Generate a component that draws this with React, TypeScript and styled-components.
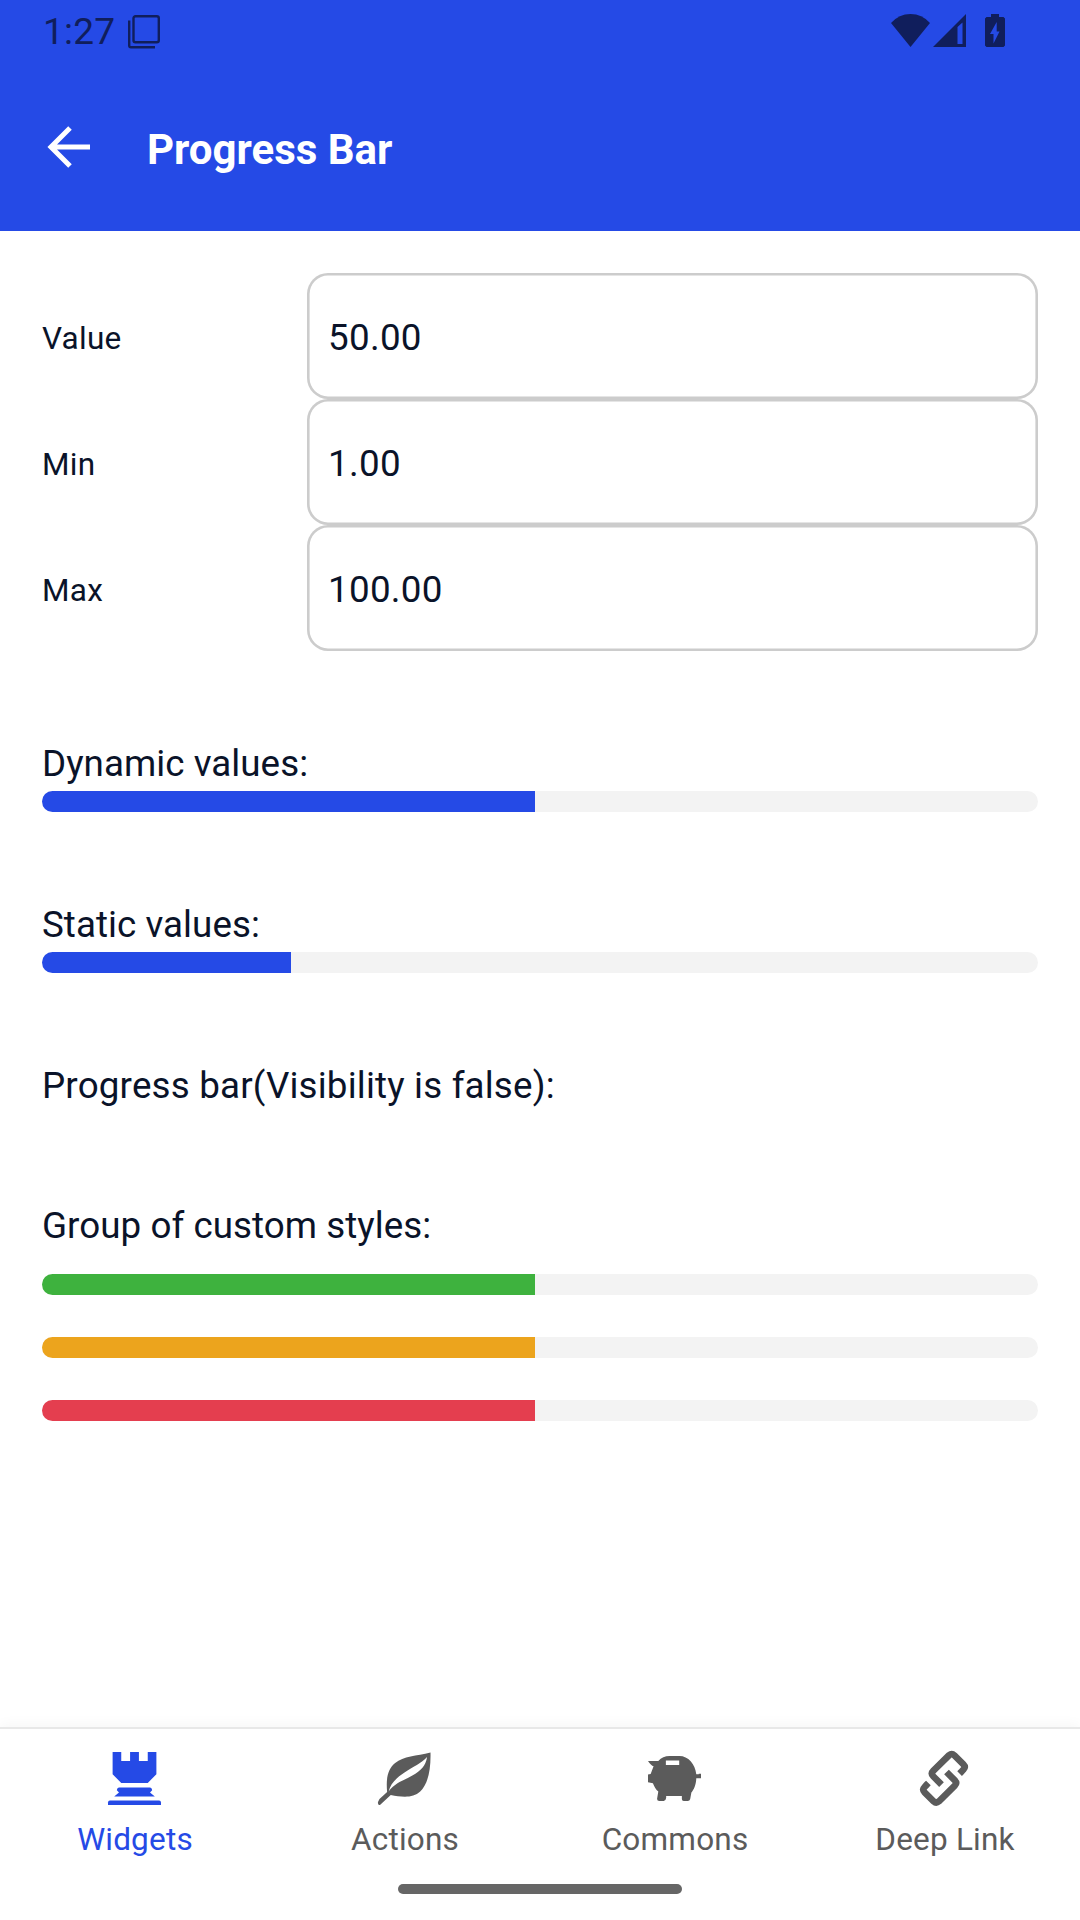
import React from "react";
import styled, { createGlobalStyle } from "styled-components";

const GlobalStyle = createGlobalStyle`
  * { box-sizing: border-box; }
  html, body { margin: 0; padding: 0; background: #fff; }
  body { font-family: Roboto, "Liberation Sans", sans-serif; color: #0a1329; overflow: hidden; }
`;

const Screen = styled.div`
  width: 1080px;
  height: 1920px;
  display: flex;
  flex-direction: column;
  background: #fff;
`;

const Header = styled.header`
  height: 231px;
  flex: none;
  display: flex;
  flex-direction: column;
  background: #254ae6;
`;

const StatusBar = styled.div`
  height: 63px;
  padding: 0 75px 2px 43px;
  display: flex;
  justify-content: space-between;
  color: #101e5c;
`;

const StatusGroup = styled.div<{ $drop?: number }>`
  display: flex;
  align-items: center;
  padding-top: ${(p) => p.$drop ?? 0}px;
`;

const Clock = styled.span`
  font-size: 37px;
  line-height: 59px;
  letter-spacing: 0.2px;
  width: 84px;
  white-space: nowrap;
`;

const AppBar = styled.div`
  flex: 1;
  padding: 0 47px;
  display: flex;
  align-items: center;
  gap: 56px;
`;

const Title = styled.h1`
  margin: 6px 0 0;
  font-size: 42px;
  line-height: 50px;
  font-weight: 700;
  color: #fff;
`;

const Content = styled.main`
  flex: 1;
  padding: 42px 42px 0;
  display: flex;
  flex-direction: column;
`;

const FieldRow = styled.div`
  display: flex;
  align-items: center;
  height: 126px;
`;

const FieldLabel = styled.span`
  width: 265px;
  font-size: 31.5px;
  line-height: 38px;
  letter-spacing: 0.25px;
  padding-top: 5px;
`;

const Field = styled.div`
  flex: 1;
  height: 126px;
  padding: 2px 21px 0;
  display: flex;
  align-items: center;
  border-radius: 21px;
  box-shadow: inset 0 0 0 2.6px #ccc;
  font-size: 36.75px;
  letter-spacing: 0.3px;
`;

const Section = styled.section<{ $top: number; $gap?: number }>`
  margin-top: ${(p) => p.$top}px;
  display: flex;
  flex-direction: column;
  gap: ${(p) => p.$gap ?? 0}px;
`;

const SectionTitle = styled.h2<{ $tracking?: number }>`
  margin: 0;
  font-size: 36.75px;
  line-height: 58px;
  height: 56px;
  font-weight: 400;
  letter-spacing: ${(p) => p.$tracking ?? 0.05}px;
`;

const BarList = styled.div`
  display: flex;
  flex-direction: column;
  gap: 42px;
`;

const Track = styled.div`
  height: 21px;
  border-radius: 10.5px;
  overflow: hidden;
  background: #f3f3f3;
`;

const Fill = styled.div<{ $color: string }>`
  height: 100%;
  background: ${(p) => p.$color};
`;

const TabBar = styled.nav`
  flex: none;
  height: 193px;
  display: flex;
  flex-direction: column;
  align-items: center;
  border-top: 2px solid #e8e8e8;
  box-shadow: 0 -3px 12px rgba(0, 0, 0, 0.035);
  background: #fff;
`;

const Tabs = styled.div`
  width: 100%;
  height: 155px;
  display: flex;
`;

const Tab = styled.div<{ $active?: boolean }>`
  flex: 1;
  display: flex;
  flex-direction: column;
  align-items: center;
  padding: 23px 1px 0 0;
  gap: 15px;
  color: ${(p) => (p.$active ? "#254ae6" : "#5b5b5b")};
`;

const TabLabel = styled.span`
  font-size: 31.5px;
  line-height: 38px;
  letter-spacing: 0.2px;
  padding-left: 1px;
`;

const HomeHandle = styled.div`
  width: 284px;
  height: 10px;
  border-radius: 5px;
  background: #666;
`;

const Glyph = styled.svg<{ $gap?: number }>`
  display: block;
  flex: none;
  overflow: visible;
  margin-left: ${(p) => p.$gap ?? 0}px;
`;

const RookIcon = () => (
  <Glyph width="53" height="54" viewBox="0 0 54 54" preserveAspectRatio="none" fill="currentColor">
    <path d="M4.700 0H13.500V9H22.500V0H31.500V9H40.500V0H49.300V22.200L40.500 31H13.500L4.700 22.200Z" />
    <path d="M11 35.500H43Q45 36 45 38.200L42.800 40.500L47.700 44.500H6.300L11.200 40.500L9 38.200Q9 36 11 35.500Z" />
    <path d="M2 48.500H52Q54 48.500 54 50.500V53H0V50.500Q0 48.500 2 48.500Z" />
  </Glyph>
);

const LeafIcon = () => (
  <Glyph width="53" height="54" viewBox="0 0 54 54" preserveAspectRatio="none" fill="currentColor">
    <path
      fillRule="evenodd"
      d="M53.500 .5C54 20 50 33 43 39.500C35.500 46.500 24 45 13 43L2 53Q-.500 53.500 0 50L1.500 47L9.300 40C8 26 10 17 17.500 11C26 4 39 4 53.500 .5ZM50 5C43 12 37 14 27 20.500C17 27 13 32 10.800 39.500C17 31 25 29 35 23.500C44 18.500 48.500 14 50 5Z"
    />
  </Glyph>
);

const PiggyIcon = () => (
  <Glyph width="53" height="54" viewBox="0 0 54 54" preserveAspectRatio="none" fill="currentColor">
    <path
      fillRule="evenodd"
      d="M0 9H10.500Q15 4 22 4H32C41 4 48 12 49.200 22.300H51.700V21.800H54V26.300H49.200C49 33 46.500 38 44.200 40.500L43 47Q42.500 49 40.500 49H36.500Q34.500 49 34.500 47V44H18.500V46Q18 49 16 49H11.500Q9 49 9.300 46.500L10.500 39.500C8 37.500 6.500 35 5 31.200L0 30.200V22.400L2.700 22L5.700 14.300Q3 13.500 0 9ZM18.200 8.500V13H31.800V8.500Z"
    />
  </Glyph>
);

const linkHalf =
  "M23.500 32.600L15.200 24.200Q12.600 21.500 15.200 18.900L31 3.300Q33.800 .9 36.400 3.300L45.400 12.300Q48 15 45.400 17.600L43 20.200L41.600 21.600";

const LinkIcon = () => (
  <Glyph width="53" height="54" viewBox="0 0 53 54" fill="none" stroke="currentColor" strokeWidth="6.600">
    <path d={linkHalf} />
    <path d={linkHalf} transform="rotate(180 26 26.300)" />
  </Glyph>
);

const BackIcon = () => (
  <Glyph width="44" height="42" viewBox="0 0 44 42" fill="none" stroke="#fff" strokeWidth="5">
    <path d="M23 2L4 21L23 40M4 21H43" />
  </Glyph>
);

const CopyIcon = () => (
  <Glyph width="34" height="34" viewBox="0 0 34 34" fill="none" stroke="currentColor" strokeWidth="2.400">
    <rect x="6.500" y="1.200" width="25.300" height="26" rx="2" />
    <path d="M2.200 5.500V30.500Q2.200 32.200 4 32.200H28" />
  </Glyph>
);

const WifiIcon = () => (
  <Glyph width="39" height="33" viewBox="0 0 39 33" fill="currentColor">
    <path d="M0 9Q8 0 19.500 0T39 9L19.500 33Z" />
  </Glyph>
);

const SignalIcon = () => (
  <Glyph $gap={3} width="33" height="33" viewBox="0 0 33 33" fill="currentColor">
    <path fillRule="evenodd" d="M0 33L33 0V33ZM24.500 13V30H29.500V8.500Z" />
  </Glyph>
);

const BatteryIcon = () => (
  <Glyph $gap={19} width="20" height="33" viewBox="0 0 20 33" fill="currentColor">
    <path
      fillRule="evenodd"
      d="M6 0H14V3H18.500L20 4.500V31.500L18.500 33H1.500L0 31.500V4.500L1.500 3H6ZM11.700 8L5 20H8.500V29.500L14.500 17.500H11.700Z"
    />
  </Glyph>
);

const fields = [
  { label: "Value", value: 50 },
  { label: "Min", value: 1 },
  { label: "Max", value: 100 },
];

const tabs = [
  { label: "Widgets", icon: <RookIcon />, active: true },
  { label: "Actions", icon: <LeafIcon /> },
  { label: "Commons", icon: <PiggyIcon /> },
  { label: "Deep Link", icon: <LinkIcon /> },
];

function ProgressBar({ value, min = 0, max = 100, color = "#254ae6" }: { value: number; min?: number; max?: number; color?: string }) {
  return (
    <Track>
      <Fill $color={color} style={{ width: `${((value - min) / (max - min)) * 100}%` }} />
    </Track>
  );
}

export default function App() {
  return (
    <Screen>
      <GlobalStyle />
      <Header>
        <StatusBar>
          <StatusGroup $drop={2}>
            <Clock>1:27</Clock>
            <CopyIcon />
          </StatusGroup>
          <StatusGroup>
            <WifiIcon />
            <SignalIcon />
            <BatteryIcon />
          </StatusGroup>
        </StatusBar>
        <AppBar>
          <BackIcon />
          <Title>Progress Bar</Title>
        </AppBar>
      </Header>
      <Content>
        {fields.map((f) => (
          <FieldRow key={f.label}>
            <FieldLabel>{f.label}</FieldLabel>
            <Field>{f.value.toFixed(2)}</Field>
          </FieldRow>
        ))}
        <Section $top={84}>
          <SectionTitle>Dynamic values:</SectionTitle>
          <ProgressBar value={50} min={1} />
        </Section>
        <Section $top={84}>
          <SectionTitle>Static values:</SectionTitle>
          <ProgressBar value={25} />
        </Section>
        <Section $top={84}>
          <SectionTitle $tracking={0.18}>Progress bar(Visibility is false):</SectionTitle>
        </Section>
        <Section $top={84} $gap={21}>
          <SectionTitle>Group of custom styles:</SectionTitle>
          <BarList>
            <ProgressBar value={50} min={1} color="#3eb23e" />
            <ProgressBar value={50} min={1} color="#eca41d" />
            <ProgressBar value={50} min={1} color="#e43e4f" />
          </BarList>
        </Section>
      </Content>
      <TabBar>
        <Tabs>
          {tabs.map((t) => (
            <Tab key={t.label} $active={t.active}>
              {t.icon}
              <TabLabel>{t.label}</TabLabel>
            </Tab>
          ))}
        </Tabs>
        <HomeHandle />
      </TabBar>
    </Screen>
  );
}
